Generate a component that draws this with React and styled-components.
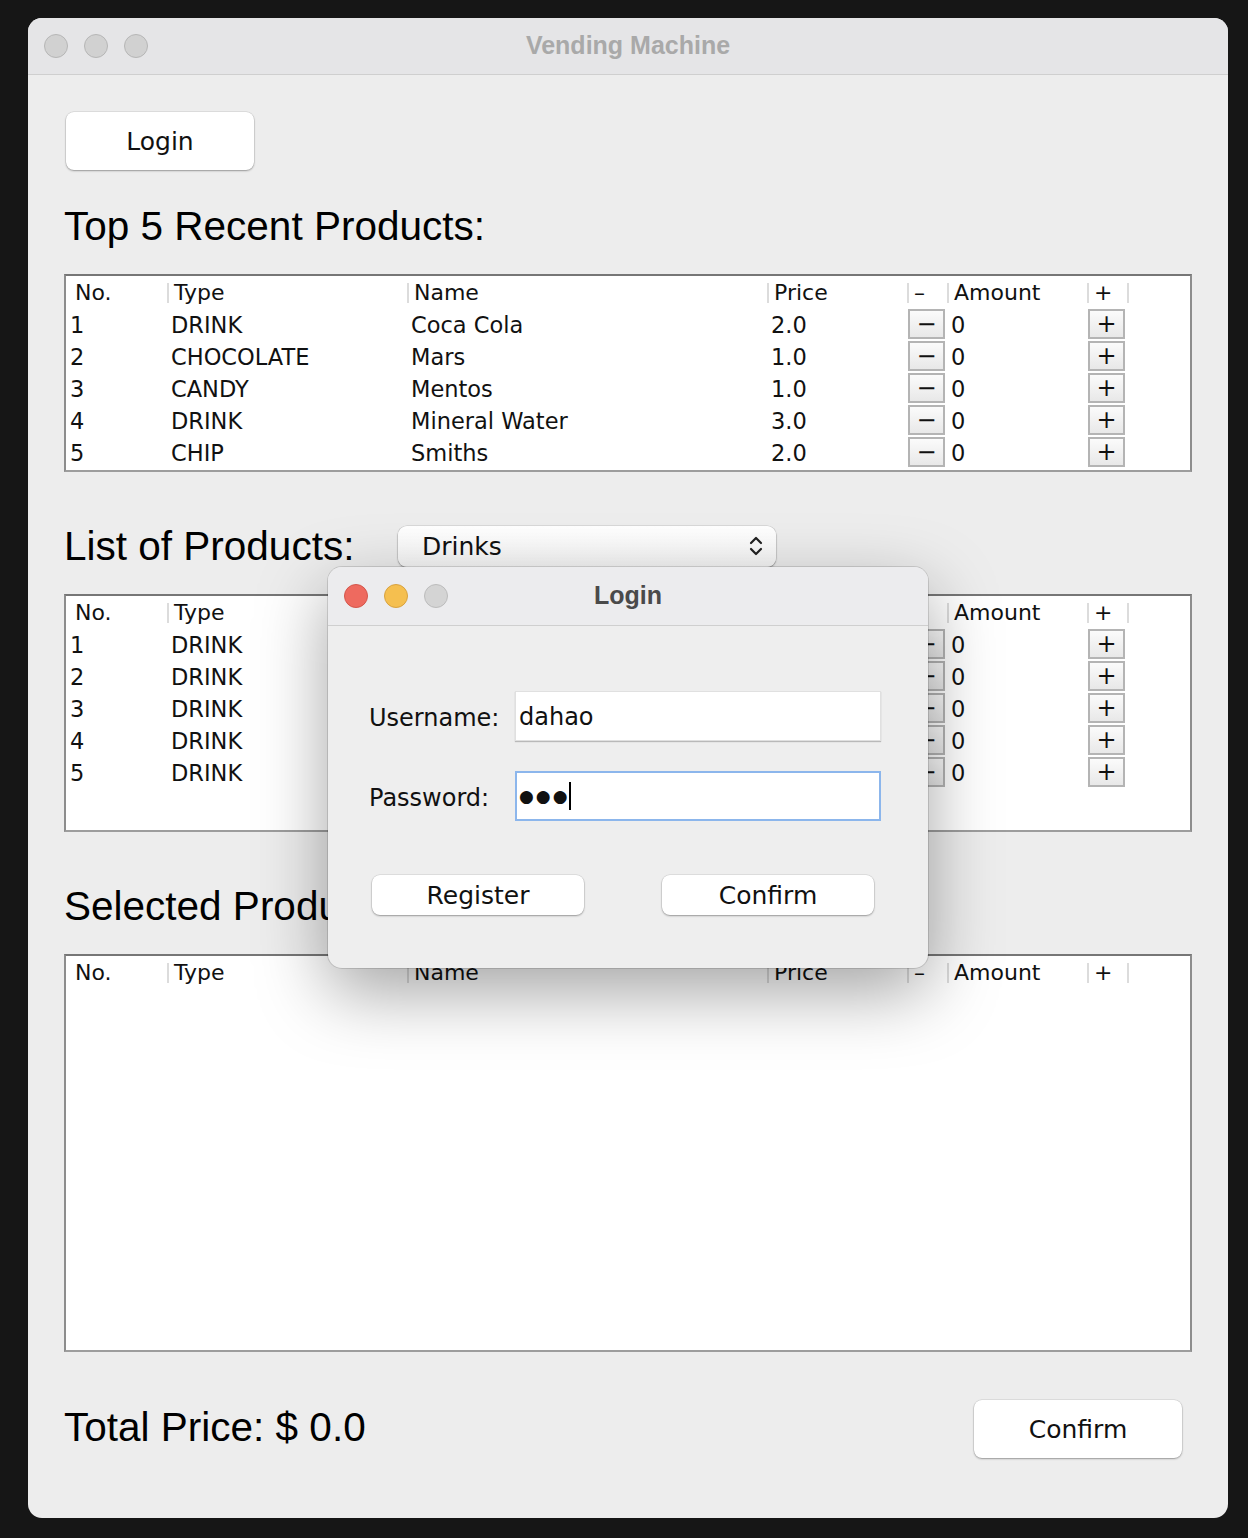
import React from 'react';
import styled, { createGlobalStyle } from 'styled-components';

const Global = createGlobalStyle`
  html, body { margin: 0; padding: 0; background: #161616; }
  body { width: 1248px; height: 1538px; overflow: hidden; font-family: "DejaVu Sans", sans-serif; color: #111; }
`;

const Stage = styled.div`
  padding: 18px 20px 20px 28px;
`;

const Window = styled.div`
  position: relative;
  width: 1200px;
  height: 1500px;
  background: #ededed;
  border-radius: 14px;
  overflow: hidden;
`;

const TitleBar = styled.div`
  height: ${p => (p.$dialog ? 58 : 56)}px;
  background: ${p => (p.$dialog ? '#ececee' : '#e5e5e7')};
  border-bottom: 1px solid #cfcfcf;
  display: grid;
  grid-template-columns: 1fr auto 1fr;
  align-items: center;
  padding: 0 16px;
`;

const Lights = styled.div`
  display: flex;
  gap: 16px;
`;

const Light = styled.span`
  width: 24px;
  height: 24px;
  box-sizing: border-box;
  border-radius: 50%;
  background: ${p => p.$bg};
  border: 1px solid ${p => p.$bd};
`;

const Title = styled.div`
  font-family: "Liberation Sans", Arial, sans-serif;
  font-weight: 700;
  font-size: 25px;
  margin-top: -2px;
  color: ${p => p.$color};
`;

const Content = styled.div`
  padding: 0 36px;
  display: flex;
  flex-direction: column;
  align-items: flex-start;
`;

const MacButton = styled.div`
  width: ${p => p.$w}px;
  height: ${p => p.$h}px;
  box-sizing: border-box;
  background: #fff;
  border-radius: 8px;
  box-shadow: 0 1px 2px rgba(0, 0, 0, 0.32), 0 0 0 0.5px rgba(0, 0, 0, 0.12);
  display: flex;
  align-items: center;
  justify-content: center;
  font-size: 25px;
  color: #111;
`;

const LoginButton = styled(MacButton)`
  margin: 37px 0 0 2px;
`;

const Heading = styled.div`
  font-family: "Liberation Sans", Arial, sans-serif;
  font-size: 40.5px;
  line-height: 48px;
  height: 48px;
  margin-top: ${p => p.$mt}px;
  color: #000;
  white-space: nowrap;
`;

const HeadingRow = styled.div`
  display: grid;
  grid-template-columns: 334px 378px;
  align-items: center;
  height: 48px;
  margin-top: 50px;
`;

const Select = styled.div`
  height: 41px;
  box-sizing: border-box;
  border-radius: 9px;
  background: linear-gradient(#ffffff, #f6f6f6);
  box-shadow: 0 1px 2px rgba(0, 0, 0, 0.35), 0 0 0 0.5px rgba(0, 0, 0, 0.14);
  display: flex;
  align-items: center;
  justify-content: space-between;
  padding: 0 13px 0 24px;
  font-size: 25px;
`;

const TableBox = styled.div`
  width: 1128px;
  height: ${p => p.$h}px;
  box-sizing: border-box;
  margin-top: 24px;
  background: #fff;
  border: 2px solid #8d8d8d;
  border-top-color: #767676;
  border-bottom-color: #9d9d9d;
`;

const TableGrid = styled.div`
  display: grid;
  grid-template-columns: 101px 240px 360px 140px 40px 140px 40px 2px;
  grid-auto-rows: 32px;
`;

const HeadCell = styled.div`
  position: relative;
  padding: 1px 0 0 ${p => (p.$first ? 9 : 7)}px;
  font-size: 22px;
  line-height: 32px;
  white-space: nowrap;
  color: #111;
  &::before {
    content: '';
    display: ${p => (p.$first ? 'none' : 'block')};
    position: absolute;
    left: 0;
    top: 7px;
    width: 2px;
    height: 20px;
    background: #dcdcdc;
  }
`;

const Cell = styled.div`
  padding: 1px 0 0 4px;
  font-size: 22.5px;
  line-height: 32px;
  white-space: nowrap;
  color: #111;
`;

const BtnCell = styled.div`
  padding: 1px 0 0 1px;
`;

const StepBtn = styled.div`
  width: 37px;
  height: 30px;
  box-sizing: border-box;
  border: 2px solid #b4b4b4;
  background: linear-gradient(#fbfbfb, #e8e8e8);
  display: flex;
  align-items: center;
  justify-content: center;
  font-size: 24px;
  line-height: 1;
  color: #111;
`;

const BottomRow = styled.div`
  width: 1118px;
  display: flex;
  align-items: center;
  justify-content: space-between;
  margin-top: 48px;
  height: 58px;
`;

const Total = styled.div`
  font-family: "Liberation Sans", Arial, sans-serif;
  font-size: 40.5px;
  color: #000;
  margin-top: -4px;
`;

const Dialog = styled.div`
  position: absolute;
  left: 300px;
  top: 549px;
  width: 600px;
  height: 401px;
  background: #eeeeee;
  border-radius: 14px;
  overflow: hidden;
  box-shadow: 0 24px 70px rgba(0, 0, 0, 0.36), 0 0 0 1px rgba(0, 0, 0, 0.13);
`;

const DialogBody = styled.div`
  padding: 65px 0 0 41px;
`;

const FormGrid = styled.div`
  display: grid;
  grid-template-columns: 146px 366px;
  row-gap: 30px;
  align-items: center;
`;

const Label = styled.div`
  font-size: 24px;
  padding-top: 3px;
  color: #111;
`;

const Field = styled.div`
  height: 50px;
  box-sizing: border-box;
  background: #fff;
  display: flex;
  align-items: center;
  font-size: 24px;
  color: #111;
  border: ${p => (p.$focused ? '2px solid #8cb6ec' : '1px solid #e0e0e0')};
  padding: 2px 0 0 ${p => (p.$focused ? 2 : 3)}px;
  box-shadow: ${p => (p.$focused ? 'none' : '0 1px 1px rgba(0,0,0,0.22)')};
`;

const Dots = styled.span`
  font-size: 17px;
  letter-spacing: 2px;
  margin-top: -2px;
`;

const Caret = styled.span`
  width: 2px;
  height: 28px;
  background: #000;
  margin: -2px 0 0 -1px;
`;

const DialogButtons = styled.div`
  display: flex;
  gap: 78px;
  margin: 54px 0 0 3px;
`;

const recent = [
  ['1', 'DRINK', 'Coca Cola', '2.0'],
  ['2', 'CHOCOLATE', 'Mars', '1.0'],
  ['3', 'CANDY', 'Mentos', '1.0'],
  ['4', 'DRINK', 'Mineral Water', '3.0'],
  ['5', 'CHIP', 'Smiths', '2.0'],
];

const drinks = [
  ['1', 'DRINK', '', ''],
  ['2', 'DRINK', '', ''],
  ['3', 'DRINK', '', ''],
  ['4', 'DRINK', '', ''],
  ['5', 'DRINK', '', ''],
];

const headers = ['No.', 'Type', 'Name', 'Price', '–', 'Amount', '+'];

function ProductTable({ rows, height }) {
  return (
    <TableBox $h={height}>
      <TableGrid>
        {headers.map((h, i) => (
          <HeadCell key={h} $first={i === 0}>{h}</HeadCell>
        ))}
        <HeadCell />
        {rows.map(r => (
          <React.Fragment key={r[0]}>
            <Cell>{r[0]}</Cell>
            <Cell>{r[1]}</Cell>
            <Cell>{r[2]}</Cell>
            <Cell>{r[3]}</Cell>
            <BtnCell><StepBtn>−</StepBtn></BtnCell>
            <Cell>0</Cell>
            <BtnCell><StepBtn>+</StepBtn></BtnCell>
            <div />
          </React.Fragment>
        ))}
      </TableGrid>
    </TableBox>
  );
}

function Chevrons() {
  return (
    <svg width="14" height="24" viewBox="0 0 14 24" fill="none" stroke="#222" strokeWidth="2.2" strokeLinecap="round" strokeLinejoin="round">
      <path d="M2 9 L7 4 L12 9" />
      <path d="M2 15 L7 20 L12 15" />
    </svg>
  );
}

export default function App() {
  return (
    <>
      <Global />
      <Stage>
        <Window>
          <TitleBar>
            <Lights>
              <Light $bg="#d1d1d1" $bd="#b6b6b6" />
              <Light $bg="#d1d1d1" $bd="#b6b6b6" />
              <Light $bg="#d1d1d1" $bd="#b6b6b6" />
            </Lights>
            <Title $color="#a9a9a9">Vending Machine</Title>
            <div />
          </TitleBar>
          <Content>
            <LoginButton $w={188} $h={58}>Login</LoginButton>
            <Heading $mt={32}>Top 5 Recent Products:</Heading>
            <ProductTable rows={recent} height={198} />
            <HeadingRow>
              <Heading $mt={0}>List of Products:</Heading>
              <Select>
                <span>Drinks</span>
                <Chevrons />
              </Select>
            </HeadingRow>
            <ProductTable rows={drinks} height={238} />
            <Heading $mt={50}>Selected Products:</Heading>
            <ProductTable rows={[]} height={398} />
            <BottomRow>
              <Total>Total Price: $ 0.0</Total>
              <MacButton $w={208} $h={58}>Confirm</MacButton>
            </BottomRow>
          </Content>

          <Dialog>
            <TitleBar $dialog>
              <Lights>
                <Light $bg="#ee6a5f" $bd="#d4564b" />
                <Light $bg="#f5bf4f" $bd="#d8a23f" />
                <Light $bg="#d4d4d4" $bd="#bcbcbc" />
              </Lights>
              <Title $color="#4a4a4a">Login</Title>
              <div />
            </TitleBar>
            <DialogBody>
              <FormGrid>
                <Label>Username:</Label>
                <Field>dahao</Field>
                <Label>Password:</Label>
                <Field $focused>
                  <Dots>●●●</Dots>
                  <Caret />
                </Field>
              </FormGrid>
              <DialogButtons>
                <MacButton $w={212} $h={40}>Register</MacButton>
                <MacButton $w={212} $h={40}>Confirm</MacButton>
              </DialogButtons>
            </DialogBody>
          </Dialog>
        </Window>
      </Stage>
    </>
  );
}
